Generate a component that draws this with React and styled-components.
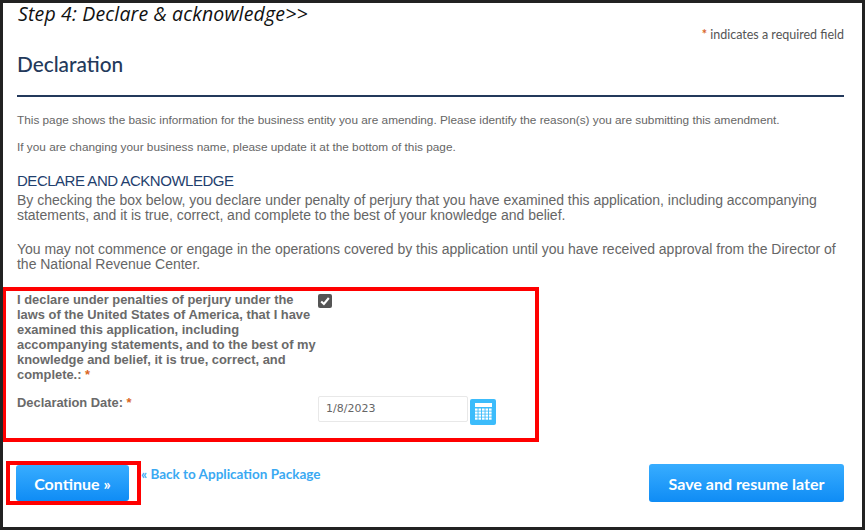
import React from 'react'
import styled, { createGlobalStyle } from 'styled-components'

const GlobalStyle = createGlobalStyle`
	html, body {
		margin: 0;
		padding: 0;
		background: #fff;
	}
	* {
		box-sizing: border-box;
	}
`

export default function App() {
	return (
		<>
			<GlobalStyle />
			<Frame>
				<StepTitle>Step 4: Declare &amp; acknowledge&gt;&gt;</StepTitle>
				<RequiredNote><Star>*</Star> indicates a required field</RequiredNote>
				<PageTitle>Declaration</PageTitle>
				<Rule />
				<SmallText $gap={17}>This page shows the basic information for the business entity you are amending. Please identify the reason(s) you are submitting this amendment.</SmallText>
				<SmallText $gap={14}>If you are changing your business name, please update it at the bottom of this page.</SmallText>
				<SectionTitle>DECLARE AND ACKNOWLEDGE</SectionTitle>
				<Paragraph $gap={4}>By checking the box below, you declare under penalty of perjury that you have examined this application, including accompanying statements, and it is true, correct, and complete to the best of your knowledge and belief.</Paragraph>
				<Paragraph $gap={19}>You may not commence or engage in the operations covered by this application until you have received approval from the Director of the National Revenue Center.</Paragraph>

				<Highlight>
					<FormRow>
						<FieldLabel>I declare under penalties of perjury under the laws of the United States of America, that I have examined this application, including accompanying statements, and to the best of my knowledge and belief, it is true, correct, and complete.: <Star>*</Star></FieldLabel>
						<CheckBox>
							<svg width="10" height="10" viewBox="0 0 10 10">
								<path d="M1.2 5.4 L3.9 8 L8.8 2" fill="none" stroke="#fff" strokeWidth="2.1" />
							</svg>
						</CheckBox>
					</FormRow>
					<DateRow>
						<FieldLabel>Declaration Date: <Star>*</Star></FieldLabel>
						<DateField>1/8/2023</DateField>
						<CalendarButton>
							<svg width="22" height="22" viewBox="0 0 22 22">
								<rect x="3" y="2" width="17" height="4" fill="#fff" />
								{[7.5, 10.5, 13.5, 16.5].map((y) =>
									[3, 6.5, 10, 13.5, 17].map((x) => (
										<rect key={`${x}-${y}`} x={x} y={y} width="2.6" height="2.2" fill="#fff" />
									))
								)}
							</svg>
						</CalendarButton>
					</DateRow>
				</Highlight>

				<Actions>
					<ContinueHighlight>
						<BlueButton $width={113} $height={36} $size={16}>Continue »</BlueButton>
					</ContinueHighlight>
					<BackLink>« Back to Application Package</BackLink>
					<SaveButton $width={195} $height={38} $size={16}>Save and resume later</SaveButton>
				</Actions>
			</Frame>
		</>
	)
}

const Frame = styled.div`
	background: #fff;
	border: 3px solid #222;
	display: flex;
	flex-direction: column;
	padding: 0 18px 0 14px;
	width: 865px;
	height: 530px;
	font-family: "Liberation Sans", Arial, sans-serif;
	overflow: hidden;
`
const StepTitle = styled.div`
	color: #111;
	font-family: "Open Sans", sans-serif;
	font-style: italic;
	font-weight: 500;
	font-size: 19.5px;
	letter-spacing: 0.16px;
	line-height: 22px;
	margin-left: 1px;
`
const RequiredNote = styled.div`
	align-self: flex-end;
	color: #555;
	font-family: "Lato", sans-serif;
	font-size: 12.5px;
	line-height: 14px;
	margin-top: 3px;
`
const Star = styled.span`
	color: #d9661f;
	font-weight: bold;
`
const PageTitle = styled.h1`
	color: #23395b;
	font-family: "Lato", sans-serif;
	font-size: 20.8px;
	font-weight: 500;
	line-height: 26px;
	margin: 9px 0 0;
`
const Rule = styled.div`
	background: #23395b;
	height: 2px;
	margin-top: 18px;
`
const SmallText = styled.p`
	color: #666;
	font-size: 11.8px;
	line-height: 13px;
	margin: ${(p) => p.$gap}px 0 0;
	white-space: nowrap;
`
const SectionTitle = styled.h2`
	color: #1f3f6e;
	font-size: 15px;
	font-weight: normal;
	letter-spacing: -0.48px;
	line-height: 16px;
	margin: 19px 0 0;
`
const Paragraph = styled.p`
	color: #666;
	font-size: 14px;
	letter-spacing: -0.02px;
	line-height: 15px;
	margin: ${(p) => p.$gap}px 0 0;
`
const Highlight = styled.div`
	border: 4px solid #f00;
	display: flex;
	flex-direction: column;
	margin: 15px 0 0 -15px;
	padding: 1px 0 0 11px;
	flex-shrink: 0;
	width: 537px;
	height: 155px;
`
const FormRow = styled.div`
	display: flex;
	align-items: flex-start;
`
const FieldLabel = styled.div`
	color: #6a6a6a;
	flex-shrink: 0;
	font-size: 12.9px;
	font-weight: bold;
	line-height: 15px;
	width: 301px;
`
const CheckBox = styled.div`
	align-items: center;
	background: #555;
	border-radius: 2px;
	display: flex;
	justify-content: center;
	margin-top: 2px;
	width: 14px;
	height: 14px;
`
const DateRow = styled.div`
	display: flex;
	align-items: flex-start;
	margin-top: 13px;
`
const DateField = styled.div`
	border: 1px solid #e8e8e8;
	border-radius: 2px;
	color: #666;
	font-family: "DejaVu Sans", sans-serif;
	font-size: 11px;
	line-height: 24px;
	margin-top: 1px;
	padding-left: 7px;
	width: 150px;
	height: 26px;
`
const CalendarButton = styled.div`
	align-items: center;
	background: #3cbcfb;
	border-radius: 2px;
	display: flex;
	justify-content: center;
	margin: 4px 0 0 2px;
	width: 26px;
	height: 26px;
`
const Actions = styled.div`
	display: flex;
	align-items: flex-start;
	margin: 19px 0 0 -14px;
`
const ContinueHighlight = styled.div`
	border: 4px solid #f00;
	flex-shrink: 0;
	margin-left: 3px;
	padding: 0 6px;
	width: 135px;
	height: 44px;
`
const BlueButton = styled.div`
	align-items: center;
	background: linear-gradient(#38adff, #0f8cf5);
	border-radius: 3px;
	color: #fff;
	display: flex;
	font-family: "Lato", sans-serif;
	font-size: ${(p) => p.$size}px;
	font-weight: bold;
	justify-content: center;
	width: ${(p) => p.$width}px;
	height: ${(p) => p.$height}px;
`
const BackLink = styled.div`
	color: #3aa9f2;
	font-family: "Lato", sans-serif;
	font-size: 13.5px;
	font-weight: bold;
	line-height: 16px;
	margin-top: 5px;
`
const SaveButton = styled(BlueButton)`
	margin-left: auto;
	margin-top: 3px;
`
